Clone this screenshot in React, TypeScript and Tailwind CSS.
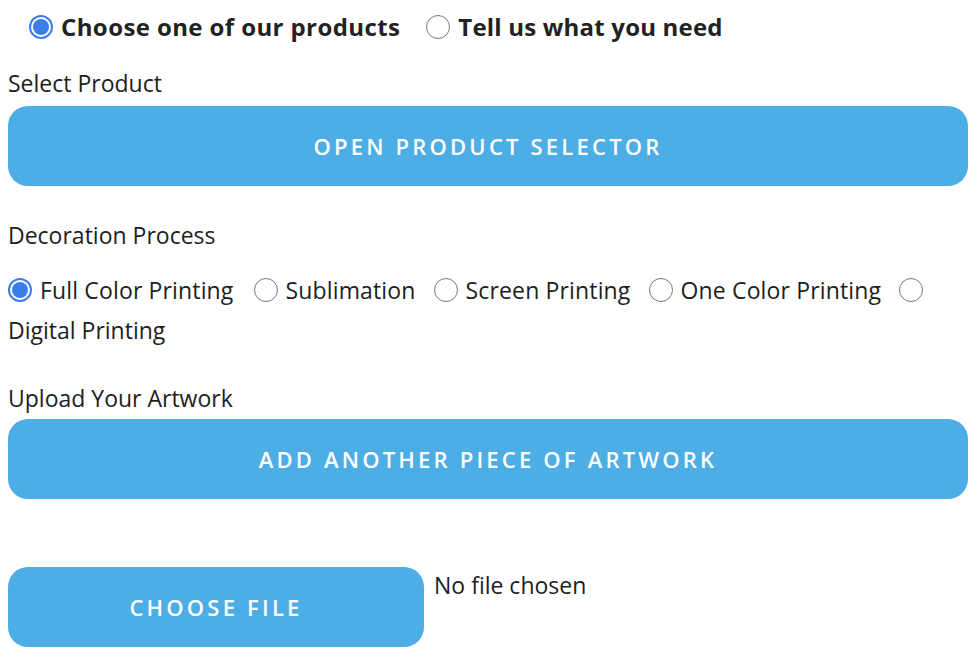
import React from "react";

function Radio({ checked }: { checked?: boolean }) {
  return checked ? (
    <span className="inline-flex h-[24px] w-[24px] shrink-0 items-center justify-center rounded-full border-[2px] border-[#3b7de9] bg-white">
      <span className="h-[16px] w-[16px] rounded-full bg-[#3b7de9]" />
    </span>
  ) : (
    <span className="inline-block h-[24px] w-[24px] shrink-0 rounded-full border-[1.5px] border-[#767676] bg-white" />
  );
}

const btn =
  "flex items-center justify-center rounded-[20px] bg-[#4daee6] text-white font-semibold uppercase tracking-[3.2px] text-[22px] font-['Open_Sans',sans-serif]";

export default function App() {
  return (
    <div className="w-[976px] h-[670px] bg-white text-[#1e1e1e] font-['Open_Sans',sans-serif] overflow-hidden">
      <div className="flex items-center pt-[13px] pl-[29px] h-[40px]">
        <label className="flex items-center gap-[8px]">
          <Radio checked />
          <span className="text-[24px] font-bold tracking-[0.4px] text-[#222]">Choose one of our products</span>
        </label>
        <label className="ml-[26px] flex items-center gap-[8px]">
          <Radio />
          <span className="text-[24px] font-bold tracking-[0.2px] text-[#222]">Tell us what you need</span>
        </label>
      </div>

      <div className="px-[8px]">
        <div className="mt-[28px] text-[23px] leading-[30px]">Select Product</div>
        <div className={btn + " mt-[8px] h-[80px] w-[960px]"}>Open Product Selector</div>

        <div className="mt-[34px] text-[23px] leading-[30px]">Decoration Process</div>
        <div className="mt-[25px] flex flex-wrap items-center text-[23px] leading-[30px] tracking-[0.15px] w-[940px]">
          <label className="flex items-center gap-[8px] mr-[20px]">
            <Radio checked />
            <span>Full Color Printing</span>
          </label>
          <label className="flex items-center gap-[8px] mr-[18px]">
            <Radio />
            <span>Sublimation</span>
          </label>
          <label className="flex items-center gap-[8px] mr-[18px]">
            <Radio />
            <span>Screen Printing</span>
          </label>
          <label className="flex items-center gap-[8px] mr-[18px]">
            <Radio />
            <span>One Color Printing</span>
          </label>
          <Radio />
        </div>
        <div className="mt-[10px] text-[23px] leading-[30px]">Digital Printing</div>

        <div className="mt-[38px] text-[23px] leading-[30px]">Upload Your Artwork</div>
        <div className={btn + " mt-[6px] h-[80px] w-[960px]"}>Add Another Piece of Artwork</div>

        <div className="mt-[68px] flex items-start">
          <div className={btn + " h-[80px] w-[416px]"}>Choose File</div>
          <span className="ml-[10px] text-[23px] leading-[30px] mt-[3px]">No file chosen</span>
        </div>
      </div>
    </div>
  );
}
